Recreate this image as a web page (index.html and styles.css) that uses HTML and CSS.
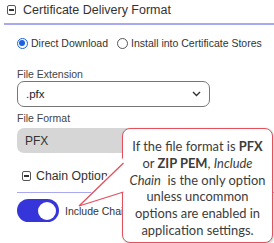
FILE: index.html
```html
<!DOCTYPE html>
<html lang="en">
<head>
<meta charset="UTF-8">
<meta name="viewport" content="width=device-width, initial-scale=1.0">
<title>Certificate Delivery Format</title>
<link rel="stylesheet" href="styles.css">
</head>
<body>
<div class="head">
    <span class="collapse"></span>
    <span class="head-title">Certificate Delivery Format</span>
</div>

<div class="panel">
    <div class="radios">
        <span class="radio checked"></span><span class="radio-label">Direct Download</span>
        <span class="radio"></span><span class="radio-label">Install into Certificate Stores</span>
    </div>

    <div class="label first">File Extension</div>
    <div class="select">
        <span>.pfx</span>
        <svg class="chevron" width="9" height="6" viewBox="0 0 9 6"><path d="M1 1 L4.5 4.5 L8 1" fill="none" stroke="#333" stroke-width="1.4"/></svg>
    </div>

    <div class="label">File Format</div>
    <div class="readonly">PFX</div>

    <div class="sub-head">
        <span class="collapse"></span>
        <span class="sub-title">Chain Options</span>
    </div>

    <div class="toggle-row">
        <span class="toggle"><span class="knob"></span></span>
        <span class="toggle-label">Include Chain</span>
    </div>
</div>

<div class="callout">
    If the file format is <b>PFX</b><br>
    or <b>ZIP PEM</b>, <i>Include</i><br>
    <i>Chain</i> &nbsp;is the only option<br>
    unless uncommon<br>
    options are enabled in<br>
    application settings.
</div>
<svg class="tail" width="50" height="40" viewBox="0 0 50 40">
    <polygon points="47,-2 3,46 47,32 50,32 50,-2" fill="#fff"/>
    <path d="M47.5 3 L3 46 L47.5 32" fill="none" stroke="#e4505c" stroke-width="1.3"/>
</svg>
</body>
</html>
```

FILE: styles.css
```css
body {
    margin: 0;
    font-family: "Liberation Sans", Arial, sans-serif;
    color: #333;
    background-color: #fff;
    position: relative;
    width: 274px;
    height: 243px;
    overflow: hidden;
}
.head {
    display: flex;
    align-items: center;
    margin-left: 4px;
    padding: 2px 0 5px 3px;
    border-bottom: 2px solid #a9a9f2;
}
.collapse {
    display: inline-block;
    box-sizing: border-box;
    width: 9px;
    height: 10px;
    border: 1px solid #555;
    border-radius: 2px;
    position: relative;
}
.collapse::after {
    content: "";
    position: absolute;
    left: 1px;
    right: 1px;
    top: 3px;
    height: 1.5px;
    background-color: #333;
}
.head-title {
    font-size: 12.5px;
    line-height: 16px;
    margin-left: 7px;
}
.panel {
    padding-left: 17px;
}
.radios {
    display: flex;
    align-items: center;
    margin-top: 12px;
    height: 12px;
    font-size: 10.5px;
}
.radio {
    box-sizing: border-box;
    width: 11px;
    height: 11px;
    border: 1.2px solid #555;
    border-radius: 50%;
    position: relative;
}
.radio.checked {
    border-color: #1a62e0;
}
.radio.checked::after {
    content: "";
    position: absolute;
    left: 1.4px;
    top: 1.4px;
    width: 6px;
    height: 6px;
    border-radius: 50%;
    background-color: #1a62e0;
}
.radio-label {
    margin: 0 9px 0 3px;
}
.label {
    font-size: 10.5px;
    line-height: 12px;
    color: #444;
    margin-top: 5px;
    margin-bottom: 4px;
}
.label.first {
    margin-top: 19px;
    margin-bottom: 1px;
}
.select {
    box-sizing: border-box;
    width: 193px;
    height: 26px;
    border: 1px solid #777;
    border-radius: 7px;
    display: flex;
    align-items: center;
    justify-content: space-between;
    padding: 0 8px;
    font-size: 11.5px;
    color: #222;
}
.readonly {
    box-sizing: border-box;
    width: 193px;
    height: 25px;
    background-color: #d6d6d6;
    border-radius: 7px;
    padding: 0 8px;
    display: flex;
    align-items: center;
    font-size: 12px;
    color: #333;
}
.sub-head {
    display: flex;
    align-items: center;
    margin-top: 16px;
    padding: 0 0 9px 5px;
    border-bottom: 1.5px solid #a9a9f2;
}
.sub-title {
    font-size: 12.3px;
    line-height: 14px;
    margin-left: 5px;
}
.toggle-row {
    display: flex;
    align-items: center;
    margin-top: 6px;
}
.toggle {
    width: 42px;
    height: 23px;
    border-radius: 12px;
    background-color: #3535d9;
    position: relative;
}
.knob {
    position: absolute;
    right: 3px;
    top: 2.5px;
    width: 18px;
    height: 18px;
    border-radius: 50%;
    background-color: #fff;
}
.toggle-label {
    font-size: 10.5px;
    margin-left: 6px;
}
.callout {
    position: absolute;
    left: 122px;
    top: 128px;
    box-sizing: border-box;
    width: 151px;
    height: 115px;
    padding: 9px 0 0;
    background-color: #fff;
    border: 1.3px solid #e4505c;
    border-radius: 8px;
    box-shadow: 1px 1px 3px rgba(0,0,0,0.2);
    font-family: Lato, "Liberation Sans", sans-serif;
    font-size: 12.9px;
    line-height: 16.8px;
    color: #3c3c3c;
    text-align: center;
    white-space: nowrap;
}
.tail {
    position: absolute;
    left: 76px;
    top: 160px;
    overflow: visible;
}
```
